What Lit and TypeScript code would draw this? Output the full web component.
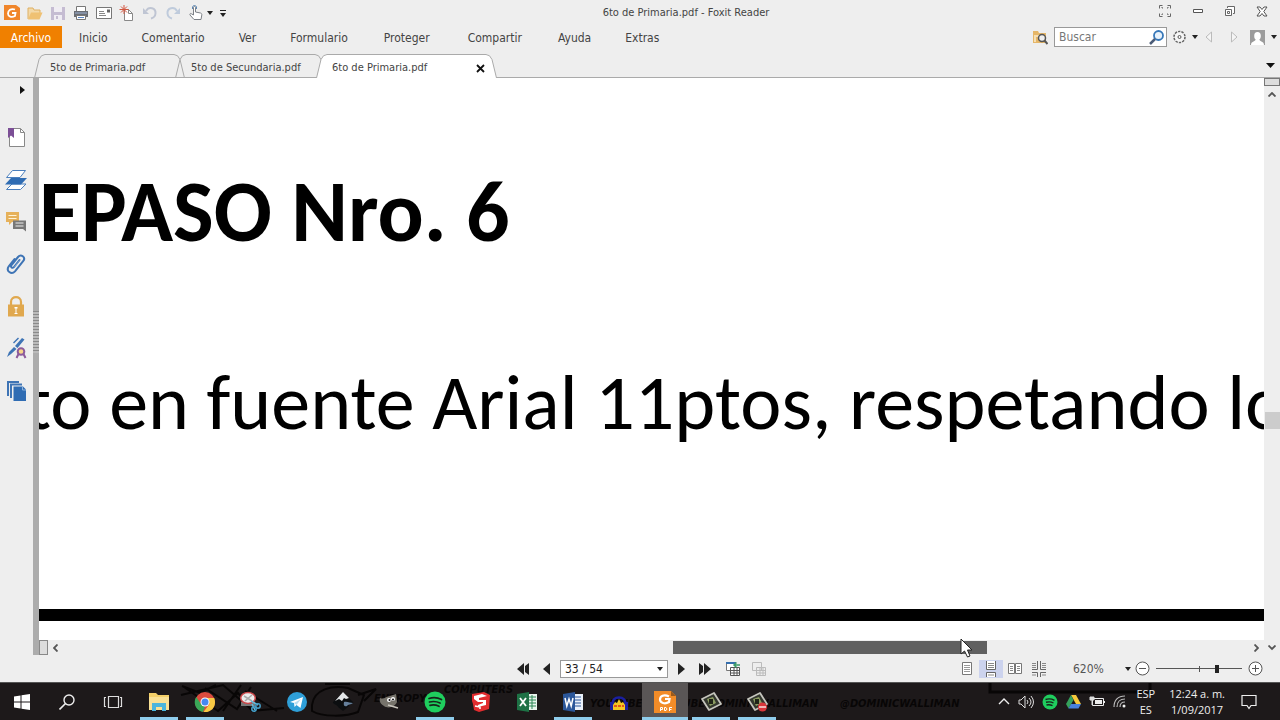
import { LitElement, html, svg, css, nothing } from "lit";
import { customElement } from "lit/decorators.js";

const icon = (w: number, h: number, body: unknown, cls = "") =>
  html`<svg class=${cls} width=${w} height=${h} viewBox="0 0 ${w} ${h}" fill="none" aria-hidden="true">${body}</svg>`;

const caret = icon(6, 4, svg`<path d="M0 0h6L3 4z" fill="#222"/>`);

const menus: { label: string; wide?: boolean }[] = [
  { label: "Inicio" }, { label: "Comentario" }, { label: "Ver" }, { label: "Formulario" },
  { label: "Proteger", wide: true }, { label: "Compartir", wide: true }, { label: "Ayuda" }, { label: "Extras" },
];

const quick: [string, unknown][] = [
  ["Foxit Reader", icon(16, 16, svg`<path d="M0 0h12l4 3v12H0z" fill="#f0852a"/><path d="M11 4.500C7 3 4 5.500 4 8.500s3.500 4.500 7 2.500l.5-3H8" stroke="#fff" stroke-width="1.800"/>`)],
  ["Abrir", icon(16, 16, svg`<path d="M1 14V3h5l1 2h6v3" fill="#f3d9a8" stroke="#dfb063"/><path d="M1 14.500 4 7.500h11.500L12.500 14.500z" fill="#efc173"/>`)],
  ["Guardar", icon(16, 16, svg`<path d="M1 2h14v13H1z" fill="#c5bcd2"/><path d="M4 2h8v5H4zM4 10h8v5H4z" fill="#f0edf3"/><path d="M6 11h2v3H6z" fill="#c5bcd2"/>`)],
  ["Imprimir", icon(16, 16, svg`<path d="M3.500 6V1.500h9V6" fill="#fff" stroke="#777"/><path d="M1 6h14v6H1z" fill="#6a6d73"/><path d="M2 8h12" stroke="#9fb5d8"/><path d="M3.500 10.500h9v4h-9z" fill="#fff" stroke="#777"/><path d="M5 12.500h6" stroke="#5b87c5"/>`)],
  ["Correo", icon(16, 16, svg`<path d="M.5 2.500h15v11H.5z" fill="#fff" stroke="#777"/><path d="M3 6.500h5M3 8.500h6M3 10.500h7" stroke="#888"/><path d="M11 4.500h3v3h-3z" fill="#666"/>`)],
  ["Nuevo", icon(16, 16, svg`<path d="M5.500 4.500h4l4 4v7h-8z" fill="#fff" stroke="#888"/><path d="M9.500 4.500v4h4" stroke="#888"/><path d="M5 0v9M.5 4.500h9M2 1.500l6 6M8 1.500l-6 6" stroke="#d2553e"/>`)],
  ["Deshacer", icon(16, 16, svg`<path d="M4 6C7 1 14 3 13.500 8.500c-.3 3-2.500 4.500-4.500 5" stroke="#bfc5d3" stroke-width="2"/><path d="M1 3v6h6z" fill="#bfc5d3"/>`)],
  ["Rehacer", icon(16, 16, svg`<path d="M12 6C9 1 2 3 2.500 8.500c.3 3 2.500 4.500 4.500 5" stroke="#bfcbdc" stroke-width="2"/><path d="M15 3v6H9z" fill="#bfcbdc"/>`)],
  ["Mano", icon(16, 16, svg`<path d="M5.500 10V2.500c0-1.500 2-1.500 2 0V7l5 1c1 .3 1.500 1 1.300 2l-.8 4.500H6L2 10c-.5-1 .5-2 1.500-1.200z" fill="#fff" stroke="#7d8187"/><path d="M4.500 4V2c.5-2 3.500-2 4 0v2" stroke="#5b87b5"/>`)],
];

const side: [string, unknown][] = [
  ["Marcadores", icon(22, 22, svg`<path d="M4.500 1.500h11l4 4v14h-15z" fill="#fff" stroke="#888"/><path d="M15.500 1.500v4h4" stroke="#888"/><path d="M3 1h6v10l-3-2.500L3 11z" fill="#7c4f96"/>`)],
  ["Capas", icon(22, 22, svg`<path d="M1.500 20.500 7 15h14l-5.500 5.500z" fill="#fff" stroke="#4b7fbd"/><path d="M0 15.500 6 9h16l-6 6.500z" fill="#2f6cb3"/><path d="M1.500 8.500 7.500 1.500h13l-5.500 7z" fill="#fff" stroke="#4b7fbd"/>`)],
  ["Comentarios", icon(22, 22, svg`<path d="M1 1h13v10H7l-3 3v-3H1z" fill="#e6b15a"/><path d="M3.500 4.500h8M3.500 7.500h8" stroke="#fff3d6"/><path d="M8 9.500h13v11l-3-2.500H8z" fill="#777"/><path d="M10.500 12h8M10.500 15h8" stroke="#eee"/>`)],
  ["Adjuntos", icon(22, 22, svg`<path d="M14.500 7 9 14c-1.500 2-4 0-2.500-2L13 4c3-3.500 8 .3 5.300 4L10 18.300c-3.500 4-9.500-.3-6.200-5L9.500 6" stroke="#3e74b5" stroke-width="2" stroke-linecap="round"/><path d="m14.500 7.500-5 6.500" stroke="#7ba2d2"/>`)],
  ["Seguridad", icon(22, 22, svg`<path d="M6 11V7c0-6.500 10-6.500 10 0v4" stroke="#e0a84e" stroke-width="2.200"/><path d="M3 9.500h16v12H3z" fill="#e0a84e"/><path d="M9.500 12h3v1.500h-1V18h1v1h-3v-1h1v-4.500h-1z" fill="#fff"/>`)],
  ["Firmas", icon(22, 22, svg`<path d="m2 20 2-5 5-5 2.500 2L6 17zM10 9l7-8 2.500 1.500L12.500 11z" fill="#3e74b5"/><path d="m8.500 6 5-5" stroke="#3e74b5" stroke-width="1.500"/><path d="m14 16-2.500 5M18 16l2.500 5" stroke="#8c5b9c" stroke-width="2"/><circle cx="16" cy="14.500" r="3.300" fill="#f7d58a" stroke="#8c5b9c" stroke-width="2"/>`)],
  ["Artículos", icon(22, 22, svg`<path d="M3 17V3h11M6 19V5.500h11" stroke="#3e74b5" stroke-width="2"/><path d="M8.500 7.500H18l3 3V22H8.500z" fill="#2f6cb3"/><path d="M17.500 7.500v3.500H21" stroke="#8db3dd"/>`)],
];

type App = { name: string; run?: boolean; active?: boolean; art: unknown };
const app = (name: string, art: unknown, run = false, active = false): App => ({ name, art, run, active });
const capture = svg`<path d="m2 8 12-6 7 11-12 6z" fill="#33372e" stroke="#c4c4bc" stroke-width="1.800" stroke-linejoin="round"/><path d="m7 8 6-2 3 6-6 3z" fill="#8c9d62"/><path d="M9 8h4v5H9z" fill="#202418"/>`;
const apps: App[] = [
  app("Explorador", svg`<path d="M1 2h7l2 2h11v15H1z" fill="#f3cf68"/><path d="M1 6h20v13H1z" fill="#f9e094"/><path d="M4 20v-8h14v8h-4v-4H8v4z" fill="#4bb5dc"/>`, true),
  app("Chrome", svg`<circle cx="11" cy="11" r="10" fill="#dc4b3e"/><path d="M2.300 6 7 13l4 3-2 4.900C2 20-1.500 12 2.300 6z" fill="#3aa757"/><path d="M20.200 7H12l3.500 6L9.500 21c9 1 13.500-7 10.700-14z" fill="#f8c944"/><circle cx="11" cy="11" r="4.500" fill="#fff"/><circle cx="11" cy="11" r="3.500" fill="#4688f1"/>`, true),
  app("Recortes", svg`<path d="M1 11h14v4H1z" fill="#777"/><ellipse cx="8" cy="7" rx="7.300" ry="5.500" fill="#ececec" stroke="#c9474a" stroke-width="1.500"/><path d="m4 5 8 5M12 4 5 10" stroke="#a9a9a9" stroke-width="1.500"/><path d="m11 10 7 4M12 13l3 6" stroke="#65bbdc" stroke-width="1.500"/><circle cx="18" cy="15" r="2.200" stroke="#459fc9" stroke-width="1.500"/><circle cx="14" cy="18" r="2.200" stroke="#459fc9" stroke-width="1.500"/>`),
  app("Telegram", svg`<circle cx="11" cy="11" r="10" fill="#2f9fd8"/><path d="m4 11 13-5-2.500 11-4-3-2 2-.5-4z" fill="#fff"/><path d="m8 12 7-4-4.500 6z" fill="#b9dcf0"/>`),
  app("Inkscape", svg`<path d="m11 1 10 10c1 2-4 2-4 4l-6 5-5-4c0-2-6-3-5-5z" fill="#0c0e10"/><path d="m11 1 6 6-3 1-2-1-2 3-3-2-4 2z" fill="#e4e6e8"/><path d="M12 11c3-1 6 1 9 1-2 2-5 1-6 3-2 1-4 0-3-4z" fill="#66809c"/>`),
  app("GIMP", svg`<path d="M2 7c4 2 6-2 10-2l6-2 1 8c-2 5-9 7-13 4-3-2-5-4-4-8z" fill="#76736b"/><circle cx="11" cy="9" r="2" fill="#fff"/><circle cx="15" cy="8" r="2" fill="#fff"/><circle cx="11.500" cy="9" r="1" fill="#111"/><circle cx="15" cy="8.500" r="1" fill="#111"/><path d="m10 14 10 3" stroke="#c9c5bd" stroke-width="1.500"/>`),
  app("Spotify", svg`<circle cx="11" cy="11" r="10.500" fill="#1fce5e"/><path d="M5 7.500c4-1.300 9-.8 12.500 1M5.500 11c4-1 7.500-.5 10.500 1M6 14.300c3-.7 6-.5 9 1" stroke="#17241b" stroke-width="1.700" stroke-linecap="round"/>`, true),
  app("SketchUp", svg`<path d="m2 3 12-2 6 3-1 14-10 3-5-2-1-6-1-3z" fill="#e22c2f"/><path d="m4 5 8-2 5 2-8 2v2l7 0v5l-8 2v-2l5-2v-1l-5 0-4-3z" fill="#fff"/><path d="M5 15l5 1v2" stroke="#fff" stroke-width="1.500"/>`),
  app("Excel", svg`<path d="M11 3h10v16H11z" fill="#e9f4ed"/><path d="M12 6h8M12 9h8M12 12h8M12 15h8M16 4v14" stroke="#2c8755"/><path d="m1 3 12-2v20L1 19z" fill="#1e7145"/><path d="m4 7 6 8M10 7l-6 8" stroke="#fff" stroke-width="1.800"/>`),
  app("Word", svg`<path d="M11 3h10v16H11z" fill="#eaf1fa"/><path d="M13 6h6M13 9h6M13 12h6M13 15h6" stroke="#2b579a"/><path d="m1 3 12-2v20L1 19z" fill="#2b579a"/><path d="m3 7 1.800 8L7 8l2.200 7L11 7" stroke="#fff" stroke-width="1.500"/>`, true),
  app("Audacity", svg`<path d="M5 14C2 4 20 4 17 14" stroke="#1a1fa0" stroke-width="2.500"/><path d="M2 11h4v8H2zM16 11h4v8h-4z" fill="#1a1fa0"/><path d="m5 14 2-3 2 1 2-4 2 4 2-1 2 3v5H5z" fill="#f3c622"/><path d="M6 15h3m1 0h3m1 0h2" stroke="#e2541c" stroke-width="2"/>`),
  app("Foxit Reader", svg`<path d="M0 0h17l5 5v17H0z" fill="#f28c28"/><path d="M17 0v5h5z" fill="#9a5a1c"/><path d="M15 5.500C10 3 6 5 6 8.500s5 5 9 2.500l.5-3H11" stroke="#fff" stroke-width="2.200"/><path d="M6.500 20v-3.500h2v2h-2M10.500 16.500v3h1.500l1-1.500-1-1.500zM15.500 20v-3.500H18M15.500 18.500h2" stroke="#fff"/>`, true, true),
  app("Captura", capture, true),
  app("Grabador", svg`${capture}<circle cx="16.500" cy="16" r="4.500" fill="#d9363a"/><path d="M13 15h7v2h-7z" fill="#f1b6b6"/>`, true),
];

@customElement("app-root")
export class AppRoot extends LitElement {
  static styles = css`
    :host { position: relative; display: flex; flex-direction: column; height: 100vh; overflow: hidden; background: #eee; color: #444;
      font: 12px/16px "DejaVu Sans Condensed", "Open Sans", sans-serif; }
    * { box-sizing: border-box; }
    button, input { font: inherit; color: inherit; border: 0; background: none; padding: 0; margin: 0; }
    button { display: inline-flex; align-items: center; justify-content: center; flex: none; }
    svg { display: block; flex: none; }
    .title { display: flex; align-items: center; height: 26px; padding: 0 12px 0 4px; font-size: 11px; }
    .title .name { margin: 0 auto; padding-right: 12px; }
    .quick { display: flex; gap: 7px; }
    .quick .drop { gap: 3px; }
    .wins { display: flex; align-items: center; align-self: flex-start; gap: 20px; height: 22px; }
    .menus { display: flex; align-items: center; height: 22px; }
    .menu { padding: 2px 17px 0; height: 22px; }
    .menu.wide { padding: 2px 19px 0; }
    .menu.file { background: #f08000; color: #fff; width: 62px; padding: 2px 0 0; }
    .tools { margin-left: auto; display: flex; align-items: center; gap: 6px; padding-right: 3px; }
    .search { display: flex; align-items: center; width: 113px; height: 20px; border: 1px solid #999; background: #fff; padding: 0 2px 0 4px; }
    .search input { width: 100%; min-width: 0; outline: 0; }
    .search input::placeholder { color: #777; opacity: 1; }
    .tabs { display: flex; align-items: flex-end; height: 30px; padding: 0 5px 0 34px; border-bottom: 1px solid #aaa; font-size: 11px; }
    .tab { display: flex; height: 24px; margin-right: -10px; margin-bottom: -1px; }
    .tab .mid { display: flex; align-items: center; justify-content: space-between; border-top: 1px solid #aaa; padding: 3px 0 0 4px; min-width: 127px; }
    .tab.on { position: relative; }
    .tab.on .mid { background: #fff; min-width: 157px; }
    .more { margin: 0 0 9px auto; }
    .work { flex: 1; min-height: 0; display: flex; }
    .side { width: 33px; display: flex; flex-direction: column; align-items: center; gap: 20px; padding: 7px 1px 0 0; }
    .side .exp { align-self: flex-end; margin-right: 7px; height: 10px; margin-bottom: 12px; }
    .split { width: 6px; background: #acacac; display: flex; align-items: center; }
    .grip { width: 6px; height: 42px; margin-top: -70px; background: repeating-linear-gradient(#8a8a8a 0 1px, #bbb 1px 3px); }
    .view { flex: 1; min-width: 0; display: flex; flex-direction: column; }
    .page { flex: 1; min-height: 0; overflow: hidden; background: #fff; color: #000; font-family: Carlito, Lato, sans-serif;
      white-space: nowrap; display: flex; flex-direction: column; padding-top: 86px; }
    .page h1 { margin: 0; font-size: 86px; line-height: 96px; font-weight: 700; }
    .page p { margin: 95px 0 0 -14px; font-size: 78px; line-height: 96px; }
    .rule { height: 12px; background: #000; margin-top: auto; margin-bottom: 19px; flex: none; }
    .hbar { display: flex; align-items: center; height: 15px; padding-right: 5px; }
    .box { width: 9px; height: 15px; border: 1px solid #888; background: #ddd; margin-right: 5px; }
    .track { flex: 1; height: 13px; display: flex; margin: 0 8px 0 6px; }
    .before { flex: 611; }
    .thumb { flex: 314; background: #606060; }
    .after { flex: 260; }
    .vbar { width: 16px; display: flex; flex-direction: column; align-items: center; }
    .vbar .vbox { width: 16px; height: 8px; border: 1px solid #777; background: #ddd; margin-bottom: 6px; }
    .vtrack { flex: 1; align-self: stretch; display: flex; flex-direction: column; }
    .up { flex: 312; }
    .vthumb { flex: 16; background: #ccc; margin-left: 1px; }
    .down { flex: 214; }
    .status { height: 27px; display: grid; grid-template-columns: 1fr auto 1fr; align-items: center; color: #444; }
    .nav { grid-column: 2; display: flex; align-items: center; gap: 10px; }
    .nav .edge { margin: 0 4px; }
    .pageno { display: flex; align-items: center; width: 108px; height: 18px; border: 1px solid #999; background: #fff; padding: 0 4px; color: #222; }
    .pageno input { width: 100%; min-width: 0; }
    .modes { justify-self: end; display: flex; align-items: center; padding-right: 17px; }
    .mode { width: 24px; height: 18px; }
    .mode.on { background: #ccd3ee; }
    .zoom { margin-left: 22px; width: 58px; justify-content: space-between; color: #555; }
    .zoomer { display: flex; align-items: center; gap: 6px; margin-left: 4px; }
    .range { appearance: none; width: 86px; height: 14px;
      background: linear-gradient(#555, #555) center / 100% 1px no-repeat, linear-gradient(#555, #555) center / 1px 6px no-repeat; }
    .range::-webkit-slider-thumb { appearance: none; width: 4px; height: 8px; background: #222; }
    .taskbar { position: relative; height: 38px; background: #1d191a; border-top: 1px solid #555; display: flex; align-items: stretch; color: #eee; font-family: "Open Sans", sans-serif; overflow: hidden; }
    .doodle { position: absolute; inset: 0; width: 100%; height: 100%; }
    .doodle text { font: italic 700 11px "DejaVu Sans Condensed", sans-serif; fill: #080606; stroke: none; }
    .sys, .task { position: relative; width: 46px; }
    .start { width: 44px; }
    .task.run { border-bottom: 3px solid #8fcdec; padding-top: 3px; width: 38px; margin: 0 4px; }
    .task.active { width: 46px; margin: 0; background: #5a5656; }
    .tray { position: relative; margin-left: auto; display: flex; align-items: center; gap: 8px; padding-right: 23px; }
    .lang, .clock { text-align: center; font-size: 11px; line-height: 16px; }
    .lang { margin-left: 2px; }
    .clock { margin: 0 8px 0 6px; }
    .cursor { position: absolute; left: 75%; top: 638px; }
  `;

  private edge(right: boolean, on: boolean) {
    const d = right ? "M0 .5h1q4 0 6 5l4.500 18.500" : "M12 .5h-1q-4 0-6 5L.5 24";
    return icon(12, 24, svg`<path d=${d + (right ? "H0z" : "H12z")} fill=${on ? "#fff" : "none"}/><path d=${d} stroke="#aaa"/>`);
  }

  private tab(label: string, on = false) {
    return html`<div class="tab ${on ? "on" : ""}" role="tab" aria-selected=${on}>${this.edge(false, on)}
      <div class="mid"><span>${label}</span>${on ? html`<button aria-label="Cerrar">${icon(9, 9, svg`<path d="m1 1 7 7M8 1 1 8" stroke="#111" stroke-width="1.800"/>`)}</button>` : nothing}</div>${this.edge(true, on)}</div>`;
  }

  render() {
    return html`
      <header class="title">
        <div class="quick">
          ${quick.map(([n, g], i) => html`<button class=${i === 8 ? "drop" : ""} aria-label=${n}>${g}${i === 8 ? caret : nothing}</button>`)}
          <button aria-label="Personalizar">${icon(6, 8, svg`<path d="M0 1.500h6" stroke="#222"/><path d="M0 4h6L3 8z" fill="#222"/>`)}</button>
        </div>
        <span class="name">6to de Primaria.pdf - Foxit Reader</span>
        <div class="wins">
          <button aria-label="Pantalla completa">${icon(14, 14, svg`<path d="M1.500 4.500v-3h3M3.500 3.500h1v1M12.500 4.500v-3h-3M10.500 3.500h-1v1M1.500 9.500v3h3M3.500 10.500h1v-1M12.500 9.500v3h-3M10.500 10.500h-1v-1" stroke="#666"/>`)}</button>
          <button aria-label="Minimizar">${icon(12, 5, svg`<path d="M1.500.5h9v3h-9z" fill="#fff" stroke="#555"/>`)}</button>
          <button aria-label="Restaurar">${icon(12, 12, svg`<path d="M3.500 3V1.500h7v7H9" fill="#fff" stroke="#666"/><path d="M1.500 4.500h6v6h-6zM3.500 6.500h2v2h-2z" fill="#fff" stroke="#666"/>`)}</button>
          <button aria-label="Cerrar">${icon(12, 11, svg`<path d="M1 1h3l2 2.500L8 1h3L7.800 5.500 11 10H8L6 7.500 4 10H1l3.200-4.500z" fill="#fff" stroke="#555"/>`)}</button>
        </div>
      </header>
      <nav class="menus">
        <button class="menu file">Archivo</button>
        ${menus.map((m) => html`<button class="menu ${m.wide ? "wide" : ""}">${m.label}</button>`)}
        <div class="tools">
          <button aria-label="Buscar en carpeta">${icon(16, 16, svg`<path d="M1 14V2h5l1 2h7v10z" fill="#e5b668"/><path d="M3 13V7h6" stroke="#f6dfb4" stroke-width="2"/><circle cx="10" cy="9" r="3.500" fill="#eee" stroke="#555" stroke-width="1.500"/><path d="m12.500 11.500 3 3.500" stroke="#555" stroke-width="2"/>`)}</button>
          <label class="search"><input aria-label="Buscar" placeholder="Buscar">${icon(15, 15, svg`<circle cx="9.500" cy="5.500" r="4.500" fill="#e8f2fb" stroke="#3677b8" stroke-width="1.800"/><path d="m6 9-5 5" stroke="#4b5c78" stroke-width="2.500"/>`)}</label>
          <button aria-label="Opciones">${icon(13, 14, svg`<circle cx="6.500" cy="7" r="5.500" stroke="#666" stroke-width="1.600" stroke-dasharray="2.300 1.100"/><circle cx="6.500" cy="7" r="4.500" fill="#f6f6f6"/><circle cx="6.500" cy="7" r="1.500" stroke="#555"/>`)}</button>
          ${caret}
          <button aria-label="Anterior">${icon(20, 12, svg`<path d="M7.500 1v10L2 6z" fill="#f5f5f5" stroke="#bbb"/>`)}</button>
          <button aria-label="Siguiente">${icon(14, 12, svg`<path d="M1.500 1v10L7 6z" fill="#f5f5f5" stroke="#bbb"/>`)}</button>
          <button aria-label="Cuenta">${icon(15, 15, svg`<path d="M0 0h15v15H0z" fill="#9b9b9b"/><ellipse cx="7.500" cy="6" rx="3.300" ry="4" fill="#fff"/><path d="M1 15c0-4 4-3 5-6h3c1 3 5 2 5 6z" fill="#fff"/>`)}</button>
          ${caret}
        </div>
      </nav>
      <div class="tabs" role="tablist">
        ${this.tab("5to de Primaria.pdf")}${this.tab("5to de Secundaria.pdf")}${this.tab("6to de Primaria.pdf", true)}
        <button class="more" aria-label="Lista">${icon(9, 5, svg`<path d="M0 0h9L4.500 5z" fill="#111"/>`)}</button>
      </div>
      <main class="work">
        <aside class="side">
          <button class="exp" aria-label="Expandir">${icon(5, 8, svg`<path d="M0 0v8l5-4z" fill="#111"/>`)}</button>
          ${side.map(([n, g]) => html`<button aria-label=${n}>${g}</button>`)}
        </aside>
        <div class="split"><div class="grip"></div></div>
        <section class="view">
          <article class="page"><h1>EPASO Nro. 6</h1><p>to en fuente Arial 11ptos, respetando lo</p><div class="rule"></div></article>
          <div class="hbar"><div class="box"></div>${icon(5, 8, svg`<path d="M4.500.5 1 4l3.500 3.500" stroke="#555" stroke-width="1.800"/>`)}
            <div class="track"><div class="before"></div><div class="thumb"></div><div class="after"></div></div>
            ${icon(5, 8, svg`<path d="M.5.5 4 4 .5 7.500" stroke="#555" stroke-width="1.800"/>`)}</div>
        </section>
        <div class="vbar"><div class="vbox"></div>${icon(8, 5, svg`<path d="M.5 4.500 4 1l3.500 3.500" stroke="#555" stroke-width="1.800"/>`)}
          <div class="vtrack"><div class="up"></div><div class="vthumb"></div><div class="down"></div></div>
          ${icon(8, 10, svg`<path d="M.5.5 4 4 7.500.5" stroke="#555" stroke-width="1.800"/>`)}</div>
      </main>
      <footer class="status">
        <div class="nav">
          <button class="edge" aria-label="Primera">${icon(12, 12, svg`<path d="M7 0v12L0 6zM12 0v12L8 9V3z" fill="#222"/>`)}</button>
          <button aria-label="Anterior">${icon(7, 12, svg`<path d="M7 0v12L0 6z" fill="#222"/>`)}</button>
          <label class="pageno"><input aria-label="Página" value="33 / 54">${caret}</label>
          <button aria-label="Siguiente">${icon(7, 12, svg`<path d="M0 0v12l7-6z" fill="#222"/>`)}</button>
          <button class="edge" aria-label="Última">${icon(12, 12, svg`<path d="M5 0v12l7-6zM0 0v12l4-3V3z" fill="#222"/>`)}</button>
          <button aria-label="Vista anterior">${icon(16, 16, svg`<path d="M1.500 1.500h9v8h-9z" fill="#fff" stroke="#777"/><path d="M1 2h10" stroke="#356fae" stroke-width="2"/><path d="M5.500 6.500h9v8h-9zM6 9.500h9M6 12h9M9 7v8M12 7v8" fill="#fff" stroke="#555"/><path d="M15 4H9m2.500-2.500L9 4l2.500 2.500" stroke="#3d9c69" stroke-width="1.500"/>`)}</button>
          <button aria-label="Vista siguiente">${icon(16, 16, svg`<path d="M1.500 1.500h9v8h-9zM5.500 6.500h9v8h-9zM6 9.500h9M6 12h9M9 7v8M12 7v8" fill="#eee" stroke="#bbb"/>`)}</button>
        </div>
        <div class="modes">
          <button class="mode" aria-label="Una página">${icon(10, 14, svg`<path d="M.5.5h9v12h-9z" fill="#fff" stroke="#777"/><path d="M2 3.500h6M2 5.500h6M2 7.500h6M2 9.500h6" stroke="#999"/>`)}</button>
          <button class="mode on" aria-label="Continua">${icon(12, 16, svg`<path d="M1.500 0v8.500h9V0M1.500 16v-4.500h9V16" fill="#fff" stroke="#666"/><path d="M3 2.500h6M3 4.500h6M3 6.500h6M3 14h6" stroke="#888"/>`)}</button>
          <button class="mode" aria-label="Dos páginas">${icon(14, 12, svg`<path d="M.5.5h6v10h-6zM7.500.5h6v10h-6z" fill="#fff" stroke="#777"/><path d="M2 3.500h3M2 5.500h3M2 7.500h3M9 3.500h3M9 5.500h3M9 7.500h3" stroke="#888"/>`)}</button>
          <button class="mode" aria-label="Dos continuas">${icon(14, 16, svg`<path d="M0 8.500h5.500V0M14 8.500H8.500V0M0 11.500h5.500V16M14 11.500H8.500V16" stroke="#666"/><path d="M0 2.500h4M0 4.500h4M0 6.500h4M10 2.500h4M10 4.500h4M10 6.500h4M0 14h4M10 14h4" stroke="#888"/>`)}</button>
          <button class="zoom">620% ${caret}</button>
          <div class="zoomer">
            <button aria-label="Reducir">${icon(15, 15, svg`<circle cx="7.500" cy="7.500" r="6.500" fill="#fff" stroke="#555"/><path d="M4 7.500h7" stroke="#555"/>`)}</button>
            <input class="range" type="range" min="0" max="100" value="72" aria-label="Zoom">
            <button aria-label="Ampliar">${icon(15, 15, svg`<circle cx="7.500" cy="7.500" r="6.500" fill="#fff" stroke="#555"/><path d="M4 7.500h7M7.500 4v7" stroke="#555"/>`)}</button>
          </div>
        </div>
      </footer>
      <footer class="taskbar">
        <svg class="doodle" fill="none" stroke="#080606" stroke-width="2" aria-hidden="true">
          <path d="m182 3 18 7 16-8m-32 2 34 24 20-18 14 18 32-3M205 5l32 21 14-22m-70 8 42-10 28 24m-10-24-18 26m22-20 32 20"/>
          <path d="M312 22c2-16 20-20 36-17l16 7-6 17c-12 5-36 5-46-1zM358 12l18-6-12 12M325 1h25" />
          <path d="M990 0v9h160V0" stroke-width="3"/>
          <text x="374" y="19">ENTROPY</text><text x="444" y="10">COMPUTERS</text>
          <text x="590" y="24">YOUTUBE &#160; YOUTUBE DOMINICWALLIMAN</text><text x="840" y="24">@DOMINICWALLIMAN</text>
        </svg>
        <button class="sys start" aria-label="Inicio">${icon(16, 16, svg`<path d="M0 2.500 6.500 1.500v6H0zM7.500 1.300 16 0v7.500H7.500zM0 8.500h6.500v6L0 13.500zM7.500 8.500H16V16l-8.500-1.300z" fill="#fff"/>`)}</button>
        <button class="sys" aria-label="Buscar">${icon(16, 16, svg`<circle cx="10" cy="6" r="5" stroke="#eee" stroke-width="1.400"/><path d="m6.500 9.500-6 6" stroke="#eee" stroke-width="1.600"/>`)}</button>
        <button class="sys" aria-label="Vista de tareas">${icon(20, 14, svg`<path d="M5.500 1.500h10v11h-10zM3 2.500H1.500v9H3M17 2.500h1.500v9H17" stroke="#ddd" stroke-width="1.200"/>`)}</button>
        ${apps.map((a) => html`<button class="task ${a.run ? "run" : ""} ${a.active ? "active" : ""}" aria-label=${a.name}>${icon(22, 22, a.art)}</button>`)}
        <div class="tray">
          ${icon(12, 7, svg`<path d="m1 6 5-5 5 5" stroke="#eee" stroke-width="1.400"/>`)}
          ${icon(16, 14, svg`<path d="M1 5h2l4-4v12L3 9H1zM9 5q2 2 0 4M11 3q4 4 0 8M13 1q5 6 0 12" stroke="#ddd"/>`)}
          ${icon(16, 16, svg`<circle cx="8" cy="8" r="7.500" fill="#1fce5e"/><path d="M3.500 5.500c3-1 6.500-.5 9 .8M4 8.300c3-.8 5.500-.4 7.500.7M4.500 11c2.300-.6 4-.4 6 .6" stroke="#17241b" stroke-width="1.400"/>`)}
          ${icon(15, 14, svg`<path d="M5 0h5l5 9h-5z" fill="#f6c83c"/><path d="M5 0 0 9l2.500 4.500L7.500 5z" fill="#35a15c"/><path d="M5 9h10l-2.500 4.500h-10z" fill="#4781de"/>`)}
          ${icon(16, 12, svg`<path d="M3.500 2.500h11v7h-11z" stroke="#eee"/><path d="M6 4h7v4H6zM15 5h1v2h-1z" fill="#eee"/><path d="M1 1h4v3H1zM3 4v5" fill="#ddd" stroke="#ddd"/>`)}
          ${icon(13, 13, svg`<path d="M1 12C1 5 5 1 12 1M4 12c0-5 3-8 8-8M7 12c0-3 2-5 5-5" stroke="#bbb" stroke-width="1.200"/><circle cx="11" cy="11" r="1.500" fill="#eee"/>`)}
          <div class="lang">ESP<br>ES</div>
          <div class="clock">12:24 a. m.<br>1/09/2017</div>
          ${icon(16, 16, svg`<path d="M1 1.500h14v10h-5L8 14.500 6 11.500H1z" stroke="#eee" stroke-width="1.200"/>`)}
        </div>
      </footer>
      ${icon(13, 20, svg`<path d="M1 1v15l3.500-3 3 6 2.500-1-2.500-6H12z" fill="#fff" stroke="#222"/>`, "cursor")}
    `;
  }
}
